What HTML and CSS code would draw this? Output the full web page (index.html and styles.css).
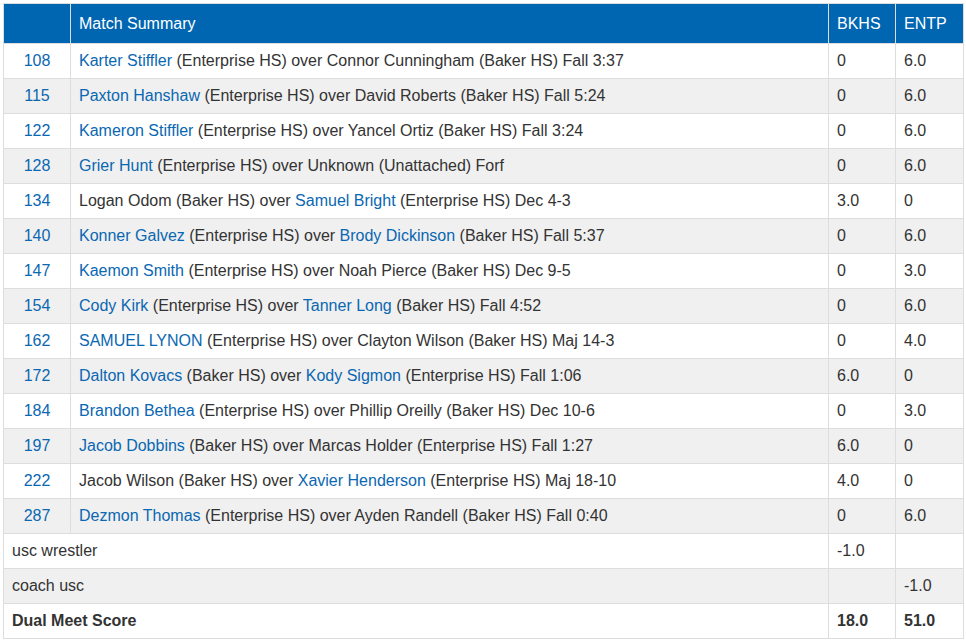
FILE: index.html
```html
<!DOCTYPE html>
<html>
<head>
<meta charset="utf-8">
<link rel="stylesheet" href="styles.css">
</head>
<body>
<table class="summary">
  <colgroup>
    <col class="c-wt"><col class="c-match"><col class="c-team"><col class="c-team2">
  </colgroup>
  <thead>
    <tr><th></th><th>Match Summary</th><th>BKHS</th><th>ENTP</th></tr>
  </thead>
  <tbody>
    <tr><td class="wt"><a>108</a></td><td><a>Karter Stiffler</a> (Enterprise HS) over Connor Cunningham (Baker HS) Fall 3:37</td><td>0</td><td>6.0</td></tr>
    <tr><td class="wt"><a>115</a></td><td><a>Paxton Hanshaw</a> (Enterprise HS) over David Roberts (Baker HS) Fall 5:24</td><td>0</td><td>6.0</td></tr>
    <tr><td class="wt"><a>122</a></td><td><a>Kameron Stiffler</a> (Enterprise HS) over Yancel Ortiz (Baker HS) Fall 3:24</td><td>0</td><td>6.0</td></tr>
    <tr><td class="wt"><a>128</a></td><td><a>Grier Hunt</a> (Enterprise HS) over Unknown (Unattached) Forf</td><td>0</td><td>6.0</td></tr>
    <tr><td class="wt"><a>134</a></td><td>Logan Odom (Baker HS) over <a>Samuel Bright</a> (Enterprise HS) Dec 4-3</td><td>3.0</td><td>0</td></tr>
    <tr><td class="wt"><a>140</a></td><td><a>Konner Galvez</a> (Enterprise HS) over <a>Brody Dickinson</a> (Baker HS) Fall 5:37</td><td>0</td><td>6.0</td></tr>
    <tr><td class="wt"><a>147</a></td><td><a>Kaemon Smith</a> (Enterprise HS) over Noah Pierce (Baker HS) Dec 9-5</td><td>0</td><td>3.0</td></tr>
    <tr><td class="wt"><a>154</a></td><td><a>Cody Kirk</a> (Enterprise HS) over <a>Tanner Long</a> (Baker HS) Fall 4:52</td><td>0</td><td>6.0</td></tr>
    <tr><td class="wt"><a>162</a></td><td><a>SAMUEL LYNON</a> (Enterprise HS) over Clayton Wilson (Baker HS) Maj 14-3</td><td>0</td><td>4.0</td></tr>
    <tr><td class="wt"><a>172</a></td><td><a>Dalton Kovacs</a> (Baker HS) over <a>Kody Sigmon</a> (Enterprise HS) Fall 1:06</td><td>6.0</td><td>0</td></tr>
    <tr><td class="wt"><a>184</a></td><td><a>Brandon Bethea</a> (Enterprise HS) over Phillip Oreilly (Baker HS) Dec 10-6</td><td>0</td><td>3.0</td></tr>
    <tr><td class="wt"><a>197</a></td><td><a>Jacob Dobbins</a> (Baker HS) over Marcas Holder (Enterprise HS) Fall 1:27</td><td>6.0</td><td>0</td></tr>
    <tr><td class="wt"><a>222</a></td><td>Jacob Wilson (Baker HS) over <a>Xavier Henderson</a> (Enterprise HS) Maj 18-10</td><td>4.0</td><td>0</td></tr>
    <tr><td class="wt"><a>287</a></td><td><a>Dezmon Thomas</a> (Enterprise HS) over Ayden Randell (Baker HS) Fall 0:40</td><td>0</td><td>6.0</td></tr>
    <tr><td colspan="2">usc wrestler</td><td>-1.0</td><td></td></tr>
    <tr><td colspan="2">coach usc</td><td></td><td>-1.0</td></tr>
    <tr class="total"><td colspan="2">Dual Meet Score</td><td>18.0</td><td>51.0</td></tr>
  </tbody>
</table>
</body>
</html>
```

FILE: styles.css
```css
html, body {
  margin: 0;
  padding: 0;
  background: #fff;
}
body {
  padding: 3px 0 0 3px;
  font-family: "Liberation Sans", Arial, Helvetica, sans-serif;
  font-size: 16px;
  color: #333;
}
.summary {
  border-collapse: collapse;
  table-layout: fixed;
  width: 960px;
}
.c-wt { width: 67px; }
.c-match { width: 758px; }
.c-team { width: 67px; }
.c-team2 { width: 68px; }
.summary th,
.summary td {
  border: 1px solid #ddd;
  text-align: left;
  padding: 7px 8px;
  line-height: 20px;
  white-space: nowrap;
}
.summary th {
  background: #0066b1;
  color: #fff;
  font-weight: normal;
  padding: 9px 8px 9px;
  line-height: 21px;
}
.summary tbody tr:nth-child(even) td {
  background: #f0f0f0;
}
.summary td.wt {
  text-align: center;
}
.summary a {
  color: #0a67b2;
  text-decoration: none;
}
.summary .total td {
  font-weight: bold;
}
```
